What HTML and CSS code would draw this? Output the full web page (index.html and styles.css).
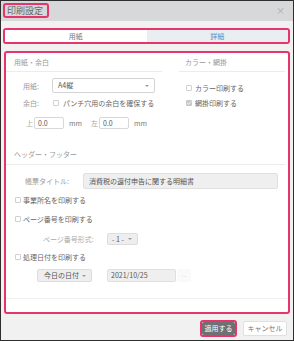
FILE: index.html
```html
<!DOCTYPE html>
<html lang="ja">
<head>
<meta charset="utf-8">
<title>印刷設定</title>
<link rel="stylesheet" href="styles.css">
</head>
<body>
<div class="dialog">
  <header class="titlebar">
    <span class="title">印刷設定</span>
    <span class="close">×</span>
  </header>

  <div class="tabs">
    <div class="tab">用紙</div>
    <div class="tab active">詳細</div>
  </div>

  <div class="panel">
    <div class="top">
      <section class="group left">
        <div class="group-head">用紙・余白</div>
        <div class="row r1">
          <span class="lbl">用紙:</span>
          <span class="select w-paper">A4縦<i class="caret"></i></span>
        </div>
        <div class="row r2">
          <span class="lbl">余白:</span>
          <span class="cb"></span>
          <span class="txt">パンチ穴用の余白を確保する</span>
        </div>
        <div class="row r3">
          <span class="side">上</span>
          <span class="input w-mm">0.0</span>
          <span class="unit">mm</span>
          <span class="side s2">左</span>
          <span class="input w-mm">0.0</span>
          <span class="unit">mm</span>
        </div>
      </section>
      <section class="group right">
        <div class="group-head">カラー・網掛</div>
        <div class="row c1">
          <span class="cb"></span>
          <span class="txt">カラー印刷する</span>
        </div>
        <div class="row c2">
          <span class="cb checked"><svg viewBox="0 0 6 6" width="6" height="6"><path d="M1.2 3.1 L2.5 4.3 L4.9 1.6" fill="none" stroke="#fff" stroke-width="0.9"/></svg></span>
          <span class="txt">網掛印刷する</span>
        </div>
      </section>
    </div>

    <section class="hf">
      <div class="group-head">ヘッダー・フッター</div>
      <div class="row t1">
        <span class="lbl-title">帳票タイトル:</span>
        <span class="input gray w-title">消費税の還付申告に関する明細書</span>
      </div>
      <div class="row k1">
        <span class="cb"></span>
        <span class="txt">事業所名を印刷する</span>
      </div>
      <div class="row k2">
        <span class="cb"></span>
        <span class="txt">ページ番号を印刷する</span>
      </div>
      <div class="row p1">
        <span class="lbl-page">ページ番号形式:</span>
        <span class="select gray w-page">- 1 -<i class="caret"></i></span>
      </div>
      <div class="row k3">
        <span class="cb"></span>
        <span class="txt">処理日付を印刷する</span>
      </div>
      <div class="row d1">
        <span class="select gray w-date">今日の日付<i class="caret"></i></span>
        <span class="input gray w-dval">2021/10/25</span>
        <span class="dots">...</span>
      </div>
    </section>

    <div class="panel-foot"></div>
  </div>

  <div class="buttons">
    <span class="apply-wrap"><span class="btn apply">適用する</span></span>
    <span class="btn cancel">キャンセル</span>
  </div>
</div>
</body>
</html>
```

FILE: styles.css
```css
* { box-sizing: border-box; }
html, body { margin: 0; padding: 0; }
body {
  width: 294px;
  height: 341px;
  font-family: "Noto Sans CJK JP", "Noto Sans", sans-serif;
  font-size: 7px;
  color: #666;
  background: #fff;
}
.dialog {
  width: 294px;
  height: 341px;
  border: 1px solid #2e2e2e;
  background: #f1f1f1;
  display: flex;
  flex-direction: column;
}
.titlebar {
  height: 20px;
  background: #d6d8da;
  display: flex;
  align-items: flex-start;
  justify-content: space-between;
  padding: 2px 8px 0 2px;
}
.title {
  border: 2px solid #e6356a;
  border-radius: 3px;
  font-size: 9px;
  line-height: 11px;
  padding: 0 4px 0 2px;
  color: #666;
}
.close {
  font-size: 9px;
  line-height: 11px;
  color: #a8a8a8;
  margin-top: 2px;
}
.tabs {
  margin: 7px 3px 0 2px;
  height: 16px;
  border: 2px solid #e6356a;
  border-radius: 3px;
  display: flex;
  overflow: hidden;
}
.tab {
  flex: 1;
  background: #fff;
  text-align: center;
  line-height: 12px;
  color: #777;
}
.tab.active {
  background: #e9eef2;
  color: #5590cc;
}
.panel {
  margin: 7px 3px 0 3px;
  height: 263px;
  border: 2px solid #e6356a;
  border-radius: 3px;
  background: #fff;
  display: flex;
  flex-direction: column;
}
.top {
  display: flex;
  gap: 17px;
  padding-right: 3px;
}
.group.left { width: 156px; }
.group.right { width: 106px; }
.group-head {
  padding: 4px 8px 4px;
  line-height: 10px;
  border-bottom: 1px solid #ececec;
  color: #999;
}
.group.right .group-head { padding-left: 6px; }
.row {
  display: flex;
  align-items: center;
  line-height: 10px;
}
.lbl { width: 29px; color: #999; }
.left .row { padding-left: 17px; }
.r1 { margin-top: 6px; height: 15px; }
.r2 { margin-top: 5px; height: 10px; }
.r2 .cb { margin-left: 1px; }
.r2 .txt { margin-left: 4px; }
.left .r3 { margin-top: 9px; height: 12px; padding-left: 20px; }
.side { color: #aaa; width: 8px; }
.s2 { margin-left: 10px; width: 8px; }
.unit { margin-left: 5px; width: 12px; color: #777; }

.select {
  position: relative;
  display: inline-block;
  border: 1px solid #d4d4d4;
  border-radius: 2px;
  background: #fff;
  color: #555;
  padding-left: 5px;
}
.select.gray { background: #eeeeee; border-color: #dddddd; }
.caret {
  position: absolute;
  right: 5px;
  top: 50%;
  margin-top: -1px;
  width: 0;
  height: 0;
  border-left: 2px solid transparent;
  border-right: 2px solid transparent;
  border-top: 2px solid #999;
}
.w-paper { width: 103px; height: 15px; line-height: 13px; }
.input {
  display: inline-block;
  border: 1px solid #d8d8d8;
  border-radius: 2px;
  background: #fff;
  color: #555;
  padding-left: 3px;
}
.input.gray { background: #efefef; border-color: #e0e0e0; }
.w-mm { width: 30px; height: 12px; line-height: 10px; }

.cb {
  display: inline-block;
  width: 6px;
  height: 6px;
  border: 1px solid #d0d0d0;
  border-radius: 1px;
  background: #fff;
  flex: none;
}
.cb svg { display: block; margin: -1px; }
.cb.checked { background: #c8c8c8; border-color: #c8c8c8; }
.txt { color: #666; }

.right .c1 { margin-top: 11px; height: 10px; padding-left: 7px; }
.right .c2 { margin-top: 5px; height: 10px; padding-left: 7px; }
.right .txt { margin-left: 3px; }

.hf { margin-top: 16px; }
.hf .group-head { padding-bottom: 5px; margin-right: 3px; }
.hf .row { padding-left: 9px; }
.hf .row .txt { margin-left: 2px; }
.t1 { margin-top: 8px; height: 16px; }
.hf .t1 { padding-left: 19px; }
.lbl-title { width: 58px; color: #999; }
.w-title { width: 195px; height: 16px; line-height: 14px; padding-left: 5px; }
.k1 { margin-top: 6px; height: 10px; }
.k2 { margin-top: 9px; height: 10px; }
.hf .p1 { margin-top: 9px; height: 12px; padding-left: 31px; }
.lbl-page { width: 70px; color: #aaa; padding-left: 6px; }
.w-page { width: 31px; height: 12px; line-height: 10px; padding-left: 4px; }
.k3 { margin-top: 7px; height: 10px; }
.hf .d1 { margin-top: 7px; height: 13px; padding-left: 31px; }
.w-date { width: 55px; height: 13px; line-height: 11px; padding-left: 6px; }
.w-dval { margin-left: 15px; width: 69px; height: 13px; line-height: 11px; padding-left: 3px; }
.dots {
  margin-left: 1px;
  width: 14px;
  height: 13px;
  background: #fafafa;
  color: #d8d8d8;
  text-align: center;
  line-height: 11px;
  font-size: 6px;
  border-radius: 2px;
}
.panel-foot {
  margin-top: auto;
  height: 14px;
  border-top: 1px solid #f0f0f0;
}

.buttons {
  display: flex;
  justify-content: flex-end;
  align-items: flex-start;
  gap: 6px;
  margin-top: 6px;
  padding-right: 6px;
}
.apply-wrap {
  display: inline-block;
  border: 2px solid #e6356a;
  border-radius: 3px;
}
.btn {
  display: inline-block;
  line-height: 13px;
  text-align: center;
  border-radius: 2px;
}
.apply {
  width: 33px;
  height: 13px;
  background: #6e7071;
  color: #fff;
}
.cancel {
  width: 44px;
  height: 15px;
  margin-top: 1px;
  background: #fff;
  border: 1px solid #e0e0e0;
  color: #777;
}
```
